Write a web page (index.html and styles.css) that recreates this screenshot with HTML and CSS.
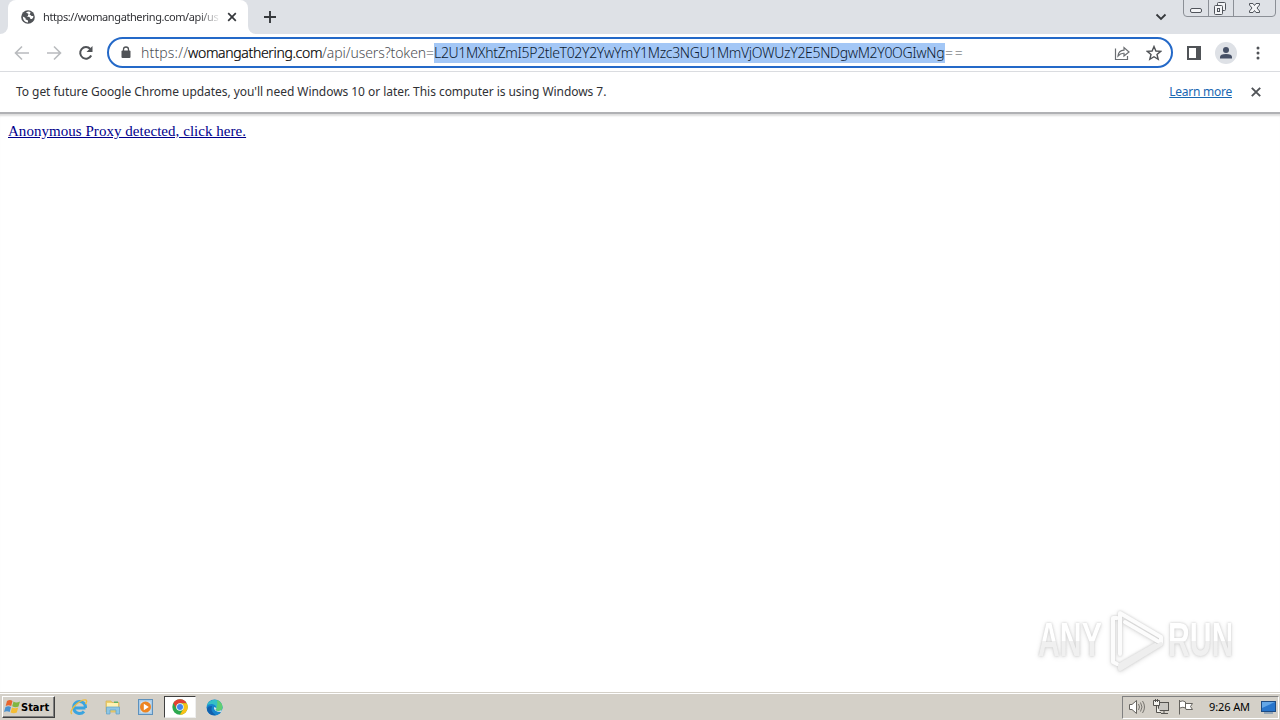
FILE: index.html
```html
<!DOCTYPE html>
<html lang="en">
<head>
    <meta charset="UTF-8">
    <meta name="viewport" content="width=device-width, initial-scale=1.0">
    <title>https://womangathering.com/api/users</title>
    <link rel="stylesheet" href="styles.css">
</head>
<body>
    <div class="screen">
        <header class="tab-strip">
            <div class="prev-tab"></div>
            <div class="tab">
                <svg class="globe" width="14" height="14" viewBox="0 0 14 14">
                    <circle cx="7" cy="7" r="6.8" fill="#505357"/>
                    <path d="M1.8 6.5 4.5 8v1.2L7 10.5V12.500Q2 12 1.800 6.500ZM5 2.500Q7.500 1 9.500 2L9 4 7 4.500V6L5.500 6.500 8.500 7 9.500 9H11Q12.500 8 12.400 6L10.500 6 9.500 5" fill="#fff"/>
                </svg>
                <span class="tab-title">https://womangathering.com/api/us</span>
                <svg class="tab-close" width="10" height="10" viewBox="0 0 10 10"><path d="M1.200 1.200 8.800 8.800M8.800 1.200 1.200 8.800" stroke="#35383c" stroke-width="1.700"/></svg>
            </div>
            <div class="strip-rest">
                <svg class="new-tab" width="12" height="12" viewBox="0 0 12 12"><path d="M6 0V12M0 6H12" stroke="#35383c" stroke-width="1.900"/></svg>
                <svg class="tab-search" width="12" height="8" viewBox="0 0 12 8"><path d="M1.500 1.500 6 6 10.500 1.500" fill="none" stroke="#35383c" stroke-width="1.800"/></svg>
                <svg class="window-buttons" width="94" height="17" viewBox="0 0 94 17">
                    <path d="M.5 0V13Q.5 16.500 4 16.500H89Q92.500 16.500 92.500 13V0M25.500 0V16M50.500 0V16" fill="none" stroke="#8b8f96"/>
                    <g fill="#f3f4f6" stroke="#50545b">
                        <rect x="7.500" y="8.500" width="11" height="4" rx="1.500"/>
                        <rect x="34.500" y="2.500" width="8" height="8" rx="1"/>
                        <rect x="31.500" y="5.500" width="8" height="9" rx="1"/>
                        <rect x="34.500" y="8.500" width="2" height="3"/>
                        <path d="M66.500 3.500H70L71.500 5.500 73 3.500H76.500V5L74 8 76.500 11V12.500H73L71.500 10.500 70 12.500H66.500V11L69 8 66.500 5Z"/>
                    </g>
                </svg>
            </div>
        </header>

        <div class="toolbar">
            <svg class="nav-icon" width="16" height="16" viewBox="0 0 16 16"><path d="M15 8H2M8 1.500 1.500 8 8 14.500" fill="none" stroke="#b9bbbe" stroke-width="1.600"/></svg>
            <svg class="nav-icon" width="16" height="16" viewBox="0 0 16 16"><path d="M1 8H14M8 1.500 14.500 8 8 14.500" fill="none" stroke="#b9bbbe" stroke-width="1.600"/></svg>
            <svg class="nav-icon" width="16" height="16" viewBox="0 0 16 16"><path d="M13.200 10.500A5.800 5.800 0 1 1 12.300 4" fill="none" stroke="#505357" stroke-width="2"/><path d="M14.500 1V7H8.500Z" fill="#505357"/></svg>
            <div class="omnibox">
                <svg class="lock" width="10" height="13" viewBox="0 0 10 13"><path d="M2.500 5V3.500a2.500 2.500 0 0 1 5 0V5" fill="none" stroke="#505357" stroke-width="1.300"/><rect x=".5" y="4.500" width="9" height="7.500" rx="1" fill="#505357"/></svg>
                <div class="url"><span class="scheme">https://</span><span class="host">womangathering.com</span><span class="path">/api/users?token=</span><span class="selected">L2U1MXhtZmI5P2tleT02Y2YwYmY1Mzc3NGU1MmVjOWUzY2E5NDgwM2Y0OGIwNg</span><span class="pad">==</span></div>
                <svg class="share" width="16" height="16" viewBox="0 0 16 16"><path d="M1.500 3.500V14.500H13.500V11M4 11Q4.500 5.500 10 5.200V2.500L15 7 10 11V8.300Q6.500 8 4 11Z" fill="none" stroke="#6b6e72" stroke-width="1.200"/></svg>
                <svg class="star" width="16" height="16" viewBox="0 0 16 16"><path d="M8 1.500 9.900 6 14.700 6.400 11 9.500 12.200 14.300 8 11.700 3.800 14.300 5 9.500 1.300 6.400 6.100 6Z" fill="none" stroke="#505357" stroke-width="1.400"/></svg>
            </div>
            <svg class="side-panel" width="14" height="14" viewBox="0 0 14 14"><path d="M1 1H13V13H1Z" fill="none" stroke="#505357" stroke-width="2"/><path d="M9 0H14V14H9Z" fill="#505357"/></svg>
            <svg class="avatar" width="22" height="22" viewBox="0 0 22 22"><circle cx="11" cy="11" r="11" fill="#dee1e6"/><circle cx="11" cy="8" r="3" fill="#465066"/><path d="M5 16.500V15Q5 12 11 12T17 15V16.500Z" fill="#465066"/></svg>
            <svg class="menu-dots" width="4" height="14" viewBox="0 0 4 14"><g fill="#505357"><circle cx="2" cy="2" r="1.500"/><circle cx="2" cy="7" r="1.500"/><circle cx="2" cy="12" r="1.500"/></g></svg>
        </div>

        <div class="infobar">
            <span class="notice">To get future Google Chrome updates, you'll need Windows 10 or later. This computer is using Windows 7.</span>
            <a class="learn-more" href="#">Learn more</a>
            <svg class="info-close" width="10" height="10" viewBox="0 0 10 10"><path d="M.8.8 9.200 9.200M9.200.8.8 9.200" stroke="#505357" stroke-width="1.900"/></svg>
        </div>

        <main class="page">
            <a class="proxy-link" href="#">Anonymous Proxy detected, click here.</a>
            <div class="watermark">
                <span class="mark-text">ANY</span>
                <svg class="mark-play" width="60" height="64" viewBox="0 0 60 64">
                    <g fill="none" stroke="#fcfcfc" stroke-width="4" stroke-linejoin="round" stroke-linecap="round">
                        <path d="M5 54V10H9M5 54 9 56M12 46V5L53 29M53 29V35L17 14"/>
                        <path d="M12 61 53 36M12 61V57L47 37" stroke="#eee"/>
                    </g>
                </svg>
                <span class="mark-text">RUN</span>
            </div>
        </main>

        <footer class="taskbar">
            <div class="start">
                <svg width="17" height="16" viewBox="0 0 17 16">
                    <path d="M3 2Q6 0 8.500 2L7.200 7Q4.500 5.500 1.700 7Z" fill="#e8642c"/>
                    <path d="M9.500 2.500Q12 4.500 16 2.500L14.500 7.500Q11.500 9 8.200 7.300Z" fill="#80b640"/>
                    <path d="M1.500 8Q4.500 6.700 7 8L5.700 13Q3 11.500 0 13Z" fill="#4a91cf"/>
                    <path d="M8 8.500Q11 10 14.200 8.500L12.800 13.500Q9.500 15 6.600 13.400Z" fill="#f4bd35"/>
                </svg>
                <span class="start-text">Start</span>
            </div>
            <div class="task-icon">
                <svg width="18" height="18" viewBox="0 0 18 18"><path d="M15.500 10H3M15.500 10A6 6 0 1 0 14 13.500" fill="none" stroke="#3ba4df" stroke-width="3"/><path d="M2 16Q-1 14 5 7.500 12 1 16 2 17.500 3 15.500 6" fill="none" stroke="#edbd43" stroke-width="1.400"/></svg>
            </div>
            <div class="task-icon">
                <svg width="18" height="18" viewBox="0 0 18 18"><path d="M2 3H7L8 4.500H15V14H2Z" fill="#edcf6d" stroke="#d6b255" stroke-width=".7"/><path d="M3 5H14V9H3Z" fill="#fff2b2"/><path d="M10 3.500H14V5H10Z" fill="#60b266"/><path d="M2.500 9H15.500V16H12V12H6V16H2.500Z" fill="#8fc6e4" stroke="#5da1ca" stroke-width=".7"/></svg>
            </div>
            <div class="task-icon">
                <svg width="18" height="18" viewBox="0 0 18 18"><rect x="1.500" y="1.500" width="14" height="15" fill="#a9cbe7" stroke="#5d91bd"/><rect x="3.500" y="3.500" width="10" height="11" fill="#d5e7f4"/><circle cx="8.500" cy="9" r="5.500" fill="#ed8522"/><path d="M6.800 5.800V12.200L11.800 9Z" fill="#fff"/></svg>
            </div>
            <div class="task-icon active">
                <svg width="16" height="16" viewBox="0 0 16 16"><circle cx="8" cy="8" r="7.700" fill="#2da94f"/><path d="M1.300 4.100A7.700 7.700 0 0 1 14.700 4.200H8A3.800 3.800 0 0 0 4.700 9.900Z" fill="#e34133"/><path d="M14.700 4.200A7.700 7.700 0 0 1 7.800 15.700L11.300 9.900A3.800 3.800 0 0 0 8 4.200Z" fill="#fbc116"/><circle cx="8" cy="8" r="3.800" fill="#fff"/><circle cx="8" cy="8" r="3" fill="#4285ee"/></svg>
            </div>
            <div class="task-icon">
                <svg width="17" height="17" viewBox="0 0 17 17"><circle cx="8.500" cy="8.500" r="8" fill="#1685ce"/><path d="M.7 7A8 8 0 0 1 16.500 8.500Q16.500 12 12 12 9 12 10.500 9 10 5.500 6 5 2 5 .7 7Z" fill="#35bfc6"/><path d="M11 1Q16.500 3 16.500 8.500 16 12 12 12 9 12 10.500 9 12 5 11 1Z" fill="#61ce72"/><path d="M6 7Q4 13 10 16.300 3 17 1 11 .5 7 6 7Z" fill="#1260ac"/><path d="M8 8Q7 13 15.500 13 17 10 13 12 8 12.500 10.500 9Z" fill="#d7e5e9"/></svg>
            </div>
            <div class="tray">
                <svg width="18" height="16" viewBox="0 0 18 16"><path d="M1.500 5.500H4L8.500 1.500V14.500L4 10.500H1.500Z" fill="#fff" stroke="#65635e"/><path d="M10.500 5Q12.500 8 10.500 11M12.500 3.500Q15.500 8 12.500 12.500M14.500 2Q18.500 8 14.500 14" fill="none" stroke="#77746f"/></svg>
                <svg width="17" height="16" viewBox="0 0 17 16"><rect x="5.500" y="3.500" width="10" height="8" fill="#c9c7c2" stroke="#55534f"/><path d="M.5 1.500H6.500V6.500H.5ZM2.500 0V3M4.500 0V3M3.500 7V13.500H8M8 14.500H15M11 12V14" fill="#f5f4ef" stroke="#55534f"/></svg>
                <svg width="17" height="16" viewBox="0 0 17 16"><path d="M2.500 1V15.500M3 2.500Q6 1 8.500 3V9Q6 7.500 3 9M8.500 4.500H15.500L13.500 7.500 15.500 10.500H9L8.500 9" fill="#fff" stroke="#65635e"/></svg>
                <span class="clock">9:26 AM</span>
                <svg class="desktop" width="15" height="14" viewBox="0 0 15 14"><rect x=".5" y="1.500" width="14" height="10" fill="#2875cb" stroke="#1e4b82"/><path d="M1 2H14L1 8Z" fill="#63a6e6"/><path d="M3 13H12" stroke="#537ca8"/></svg>
            </div>
        </footer>
    </div>
</body>
</html>
```
FILE: styles.css
```css
* {
    box-sizing: border-box;
}
body {
    margin: 0;
    background-color: #fff;
    font-family: "Noto Sans", Tahoma, sans-serif;
    font-size: 12px;
    color: #303135;
}
svg {
    display: block;
    flex: none;
}
.screen {
    width: 1280px;
    height: 720px;
    display: flex;
    flex-direction: column;
    overflow: hidden;
}
.tab-strip {
    height: 34px;
    flex: none;
    display: flex;
    background-color: #fff;
}
.prev-tab {
    width: 8px;
    background-color: #dee1e6;
    border-bottom-right-radius: 8px;
}
.tab {
    width: 240px;
    height: 34px;
    padding: 0 11px 0 13px;
    display: flex;
    align-items: center;
    background: linear-gradient(#dee1e6, #dee1e6) top / 100% 8px no-repeat;
    position: relative;
    z-index: 0;
}
.tab::before {
    content: "";
    position: absolute;
    inset: 0;
    z-index: -1;
    background-color: #fff;
    border-radius: 8px 8px 0 0;
}
.tab-title {
    width: 176px;
    margin: -1px 0 0 8px;
    white-space: nowrap;
    font-size: 11px;
    letter-spacing: -0.4px;
    -webkit-mask-image: linear-gradient(to right, #000 155px, transparent 178px);
    mask-image: linear-gradient(to right, #000 155px, transparent 178px);
}
.tab-close {
    margin-left: auto;
}
.strip-rest {
    flex: 1;
    display: flex;
    background-color: #dee1e6;
    border-bottom-left-radius: 8px;
}
.new-tab {
    margin: 11px 0 0 16px;
}
.tab-search {
    margin: 13px 16px 0 auto;
}
.window-buttons {
    margin-right: 3px;
}
.toolbar {
    height: 38px;
    flex: none;
    display: flex;
    align-items: center;
    padding: 0 20px 0 14px;
    border-bottom: 1px solid #dadce0;
}
.nav-icon {
    margin-right: 16px;
}
.omnibox {
    width: 1066px;
    height: 31px;
    margin-left: -3px;
    padding: 0 9px 0 12px;
    display: flex;
    align-items: center;
    border: 2px solid #2469c8;
    border-radius: 16px;
}
.url {
    margin-left: 10px;
    display: flex;
    font-size: 14px;
    font-weight: 300;
    line-height: 20px;
    letter-spacing: -0.33px;
    white-space: nowrap;
    color: #4c4f54;
}
.scheme {
    width: 47px;
    letter-spacing: 0.15px;
}
.host {
    width: 134px;
    color: #000;
    -webkit-text-stroke: 0.2px #000;
}
.path {
    width: 112px;
    letter-spacing: -0.09px;
}
.selected {
    width: 511px;
    background-color: #a3c7f6;
    color: #0c1a30;
}
.pad {
    letter-spacing: 1.7px;
}
.share {
    margin-left: auto;
}
.star {
    margin-left: 16px;
}
.side-panel {
    margin-left: 14px;
}
.avatar {
    margin-left: 14px;
}
.menu-dots {
    margin-left: auto;
}
.infobar {
    height: 40px;
    flex: none;
    display: flex;
    align-items: center;
    padding: 0 19px 0 16px;
}
.notice {
    margin-top: -2px;
    letter-spacing: -0.05px;
}
.learn-more {
    margin: -2px 0 0 auto;
    color: #1967b2;
    letter-spacing: -0.25px;
    text-underline-offset: 1px;
}
.info-close {
    margin-left: 19px;
}
.page {
    flex: 1;
    padding: 9px 8px;
    position: relative;
    border-top: 2px solid #b0b1b4;
    box-shadow: inset 0 3px 2px -1px #ddd;
}
.proxy-link {
    font-family: "Liberation Serif", "Times New Roman", serif;
    font-size: 15px;
    letter-spacing: 0.04px;
    color: #00008b;
}
/* logo overlays the page content */
.watermark {
    position: absolute;
    left: 1038px;
    top: 494px;
    display: flex;
    align-items: center;
    filter: drop-shadow(0 0 1px #ccc) drop-shadow(0 1px 2px #e4e4e4);
}
.mark-text {
    width: 100px;
    margin-right: -36px;
    font-family: "Liberation Sans", Arial, sans-serif;
    font-size: 48px;
    font-weight: bold;
    line-height: 64px;
    color: transparent;
    background: linear-gradient(#fff 52%, #f0f0f0 52%);
    -webkit-background-clip: text;
    background-clip: text;
    transform: scaleX(0.63);
    transform-origin: left;
}
.mark-play {
    margin-left: 6px;
}
.taskbar {
    height: 28px;
    flex: none;
    display: flex;
    align-items: center;
    background-color: #d4d0c8;
    border-top: 1px solid #d4d0c8;
    box-shadow: inset 0 1px #fff;
}
.start {
    width: 53px;
    height: 22px;
    margin: 1px 7px 0 2px;
    padding-left: 1px;
    display: flex;
    align-items: center;
    border: 1px solid;
    border-color: #fff #404040 #404040 #fff;
    box-shadow: inset -1px -1px #808080;
}
.start-text {
    font-family: "DejaVu Sans Condensed", "DejaVu Sans", sans-serif;
    font-stretch: condensed;
    font-size: 11px;
    font-weight: bold;
    color: #000;
}
.task-icon {
    width: 32px;
    height: 22px;
    margin: 1px 0.9px 0;
    display: flex;
    align-items: center;
    justify-content: center;
}
.active {
    background-color: #fff;
    border: 1px solid;
    border-color: #404040 #eee #eee #404040;
}
.tray {
    width: 157px;
    height: 23px;
    margin: 1px 1px 0 auto;
    padding: 0 2px 0 5px;
    display: flex;
    align-items: center;
    gap: 7px;
    border: 1px solid;
    border-color: #808080 #fff #fff #808080;
}
.clock {
    margin: -2px 0 0 8px;
    font-size: 11px;
    letter-spacing: -0.1px;
    color: #000;
    white-space: nowrap;
}
.desktop {
    margin-left: auto;
}
```
